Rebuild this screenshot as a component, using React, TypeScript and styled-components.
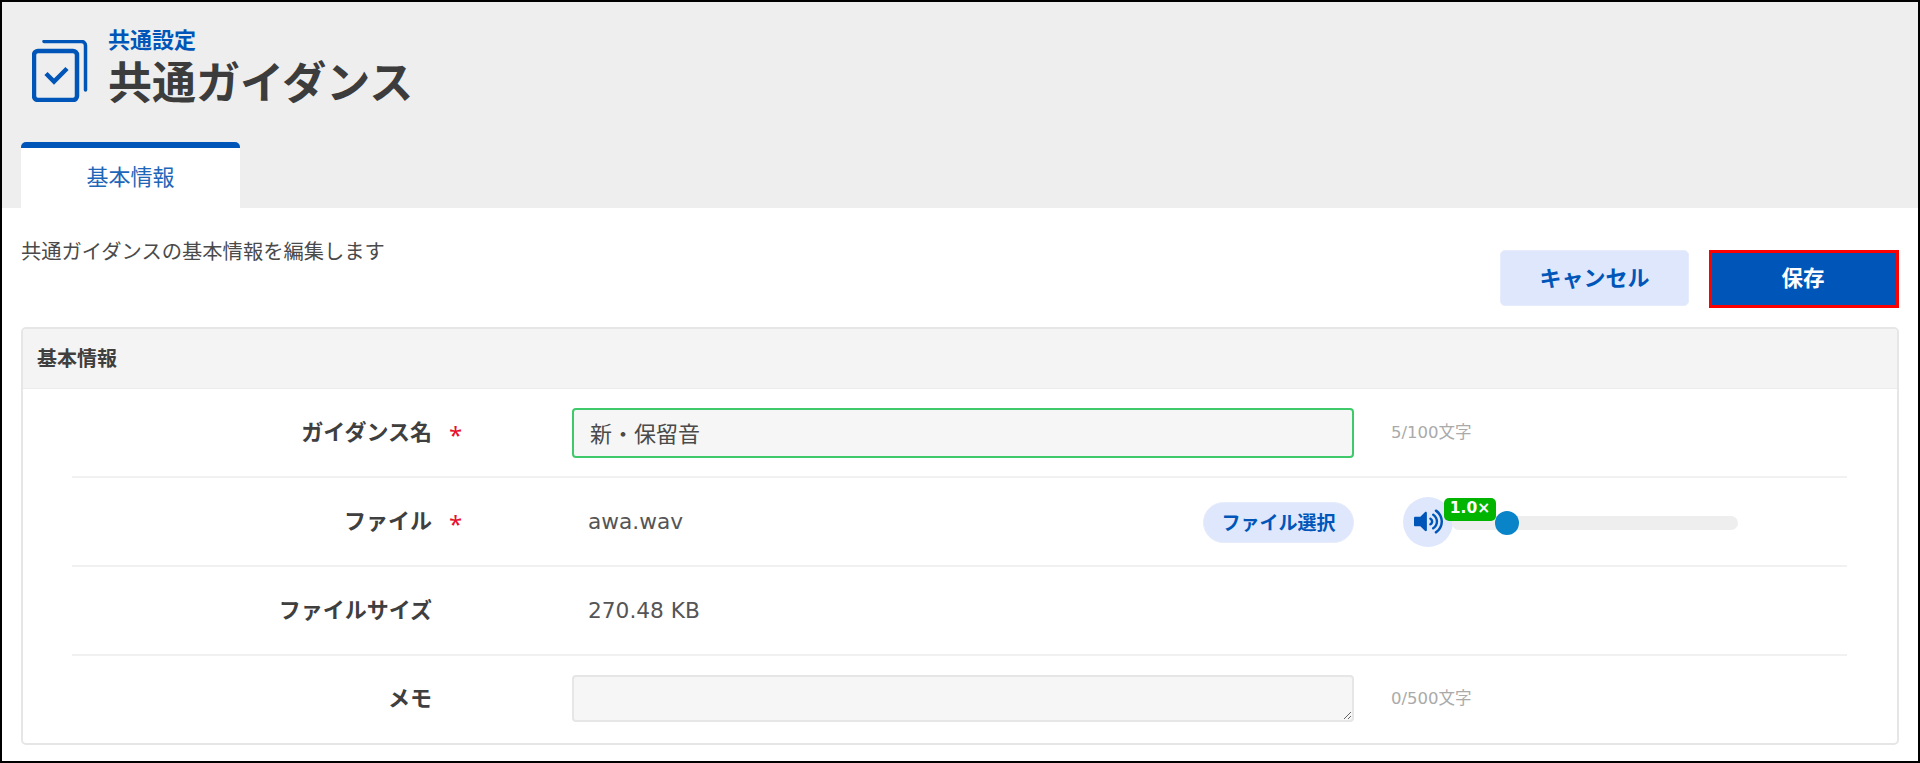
import { FaVolumeUp } from "react-icons/fa";
import styled, { createGlobalStyle } from "styled-components";

const GlobalStyle = createGlobalStyle`
  html, body {
    margin: 0;
    padding: 0;
    background: #fff;
  }
  * {
    box-sizing: border-box;
  }
  body {
    font-family: "Noto Sans", "Noto Sans CJK JP", sans-serif;
    color: #444;
  }
`;

const BLUE = "#0056b8";
const LATIN = `"DejaVu Sans", "Noto Sans CJK JP", sans-serif`;

const App = () => {
  return (
    <Frame>
      <GlobalStyle />
      <Header>
        <TitleRow>
          <PageIcon viewBox="0 0 56 62" fill="none">
            <path d="M12 1.5H49.5a4 4 0 0 1 4 4V50" stroke={BLUE} strokeWidth="3.5" strokeLinecap="round" />
            <rect x="2" y="11" width="43" height="49" rx="4" stroke={BLUE} strokeWidth="4.5" />
            <path d="M14 33.5l8 8 13-13" stroke={BLUE} strokeWidth="4.5" />
          </PageIcon>
          <TitleText>
            <Breadcrumb>共通設定</Breadcrumb>
            <Title>共通ガイダンス</Title>
          </TitleText>
        </TitleRow>
        <Tab>基本情報</Tab>
      </Header>

      <Content>
        <TopRow>
          <Description>共通ガイダンスの基本情報を編集します</Description>
          <Buttons>
            <CancelButton>キャンセル</CancelButton>
            <SaveButton>保存</SaveButton>
          </Buttons>
        </TopRow>

        <Panel>
          <PanelHeader>基本情報</PanelHeader>
          <Rows>
            <Row>
              <Label>
                ガイダンス名<Required>*</Required>
              </Label>
              <NameInput defaultValue="新・保留音" />
              <Counter>5/100文字</Counter>
            </Row>
            <Row>
              <Label>
                ファイル<Required>*</Required>
              </Label>
              <FileCell>
                <Value>awa.wav</Value>
                <FileButton>ファイル選択</FileButton>
              </FileCell>
              <Player>
                <SpeakerButton>
                  <FaVolumeUp />
                </SpeakerButton>
                <Track>
                  <Thumb />
                  <SpeedBadge>1.0×</SpeedBadge>
                </Track>
              </Player>
            </Row>
            <Row>
              <Label>ファイルサイズ</Label>
              <Value>270.48 KB</Value>
            </Row>
            <Row>
              <Label>メモ</Label>
              <MemoInput />
              <Counter>0/500文字</Counter>
            </Row>
          </Rows>
        </Panel>
      </Content>
    </Frame>
  );
};

export default App;

const Frame = styled.div`
  width: 1920px;
  height: 763px;
  border: 2px solid #000;
  overflow: hidden;
  background: #fff;
`;

const Header = styled.div`
  height: 206px;
  background-color: #eeeeee;
  padding: 23px 0 0 18px;
`;

const TitleRow = styled.div`
  display: flex;
  align-items: flex-start;
  height: 117px;
`;

const PageIcon = styled.svg`
  width: 56px;
  height: 62px;
  margin: 15px 20px 0 12px;
  flex: none;
`;

const TitleText = styled.div`
  display: flex;
  flex-direction: column;
`;

const Breadcrumb = styled.div`
  font-size: 22px;
  font-weight: 700;
  line-height: 29px;
  color: ${BLUE};
`;

const Title = styled.div`
  font-size: 44px;
  font-weight: 700;
  line-height: 56px;
  color: #3c3c3c;
`;

const Tab = styled.div`
  width: 219px;
  height: 66px;
  margin-left: 1px;
  background: #fff;
  border-top: 6px solid ${BLUE};
  border-radius: 5px 5px 0 0;
  color: #1e66b8;
  font-size: 22px;
  line-height: 56px;
  text-align: center;
`;

const Content = styled.div`
  padding: 0 19px;
`;

const TopRow = styled.div`
  display: flex;
  justify-content: space-between;
  height: 119px;
  padding-top: 20px;
`;

const Description = styled.div`
  margin-top: 8px;
  font-size: 20.3px;
  line-height: 30px;
  color: #4a4a4a;
`;

const Buttons = styled.div`
  display: flex;
  gap: 20px;
  padding-top: 22px;
  align-items: flex-start;
`;

const CancelButton = styled.button`
  width: 189px;
  height: 56px;
  padding: 0 0 4px;
  border: 1px solid #e6ecfb;
  border-radius: 5px;
  background: #dfe7fd;
  color: ${BLUE};
  font-family: inherit;
  font-size: 22px;
  font-weight: 700;
`;

const SaveButton = styled.button`
  width: 190px;
  height: 58px;
  padding: 0 2px 5px 0;
  border: 3px solid #ff0000;
  background: ${BLUE};
  color: #fff;
  font-family: inherit;
  font-size: 21.5px;
  font-weight: 700;
`;

const Panel = styled.div`
  height: 418px;
  border: 2px solid #e6e6e6;
  border-radius: 5px;
  overflow: hidden;
`;

const PanelHeader = styled.div`
  height: 60px;
  padding-left: 14px;
  background: #f4f4f4;
  border-bottom: 1px solid #ececec;
  font-size: 20px;
  font-weight: 700;
  line-height: 60px;
  color: #3f3f3f;
`;

const Rows = styled.div`
  margin: 0 50px 0 49px;
`;

const Row = styled.div`
  display: flex;
  align-items: center;
  height: 89px;
  border-bottom: 2px solid #f1f1f1;
  &:last-child {
    border-bottom: none;
    padding-bottom: 5px;
  }
`;

const Label = styled.div`
  position: relative;
  width: 360px;
  margin: -5px 140px 0 0;
  flex: none;
  text-align: right;
  font-size: 22px;
  font-weight: 700;
  color: #3f3f3f;
`;

const Required = styled.span`
  position: absolute;
  left: 377px;
  top: 4px;
  color: #e8112d;
  font-size: 24px;
  font-weight: 400;
`;

const fieldStyles = `
  width: 782px;
  flex: none;
  background: #f6f6f6;
  border-radius: 4px;
  font-family: inherit;
  font-size: 22px;
  color: #4a4a4a;
  outline: none;
`;

const NameInput = styled.input`
  ${fieldStyles}
  height: 50px;
  padding: 0 16px 2px;
  border: 2px solid #3fc96a;
`;

const MemoInput = styled.textarea`
  ${fieldStyles}
  height: 47px;
  border: 2px solid #e6e6e6;
  resize: both;
`;

const Counter = styled.div`
  margin: -3px 0 0 37px;
  font-family: ${LATIN};
  font-size: 16.5px;
  color: #aaaaaa;
`;

const FileCell = styled.div`
  display: flex;
  align-items: center;
  justify-content: space-between;
  width: 782px;
  flex: none;
`;

const Value = styled.div`
  padding-left: 16px;
  font-family: ${LATIN};
  font-size: 21.7px;
  color: #555555;
`;

const FileButton = styled.button`
  width: 151px;
  height: 41px;
  margin-top: 2px;
  border: 1px solid #e6ecfb;
  border-radius: 21px;
  background: #dfe7fd;
  color: ${BLUE};
  font-family: inherit;
  font-size: 19px;
  font-weight: 700;
  padding: 0 0 1px;
`;

const Player = styled.div`
  display: flex;
  align-items: center;
  margin-left: 49px;
`;

const SpeakerButton = styled.div`
  display: flex;
  align-items: center;
  justify-content: center;
  width: 50px;
  height: 50px;
  margin-right: -1px;
  border-radius: 50%;
  background: #dfe7fd;
  color: ${BLUE};
  font-size: 29px;
`;

const Track = styled.div`
  position: relative;
  width: 286px;
  height: 14px;
  margin-top: 2px;
  border-radius: 7px;
  background: #eeeeee;
`;

const Thumb = styled.div`
  position: absolute;
  left: 43px;
  top: -5px;
  width: 24px;
  height: 24px;
  border-radius: 50%;
  background: #0a84c8;
`;

const SpeedBadge = styled.div`
  position: absolute;
  left: -8px;
  top: -18px;
  width: 52px;
  height: 23px;
  border-radius: 5px;
  background: #00b400;
  color: #fff;
  font-family: ${LATIN};
  font-size: 15.5px;
  font-weight: 700;
  line-height: 20px;
  text-align: center;
`;
